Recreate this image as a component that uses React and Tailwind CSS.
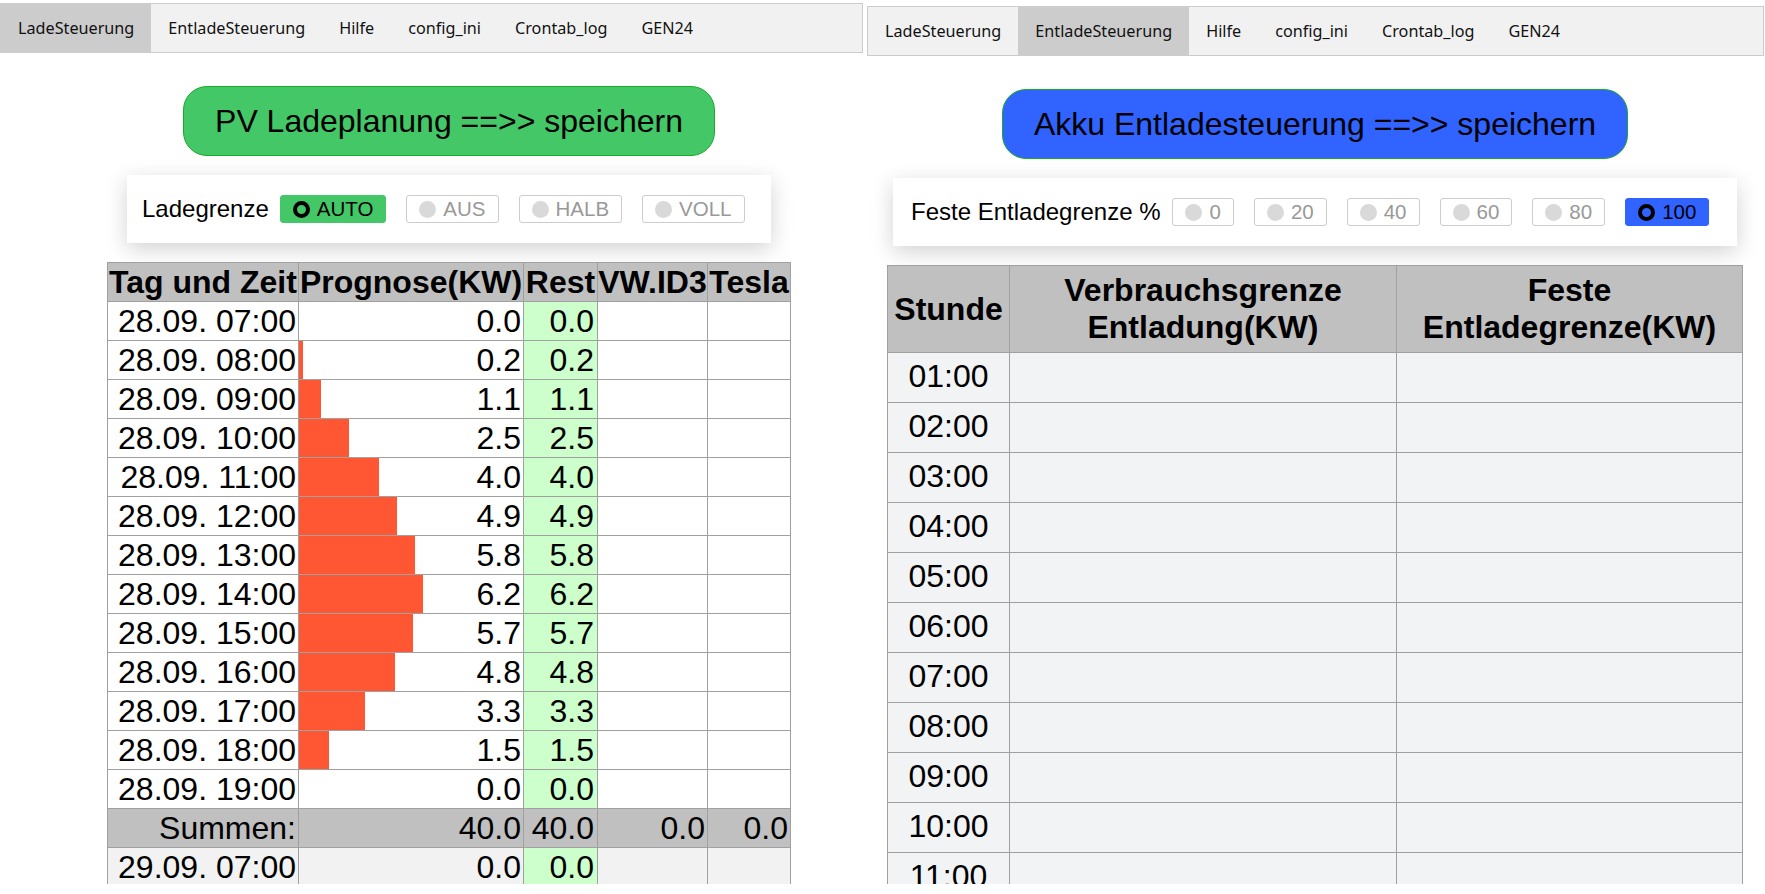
import React from "react";

const tabs = ["LadeSteuerung", "EntladeSteuerung", "Hilfe", "config_ini", "Crontab_log", "GEN24"];

const ladeRows = [
  ["28.09. 07:00", 0.0],
  ["28.09. 08:00", 0.2],
  ["28.09. 09:00", 1.1],
  ["28.09. 10:00", 2.5],
  ["28.09. 11:00", 4.0],
  ["28.09. 12:00", 4.9],
  ["28.09. 13:00", 5.8],
  ["28.09. 14:00", 6.2],
  ["28.09. 15:00", 5.7],
  ["28.09. 16:00", 4.8],
  ["28.09. 17:00", 3.3],
  ["28.09. 18:00", 1.5],
  ["28.09. 19:00", 0.0],
];

const stunden = ["01:00", "02:00", "03:00", "04:00", "05:00", "06:00", "07:00", "08:00", "09:00", "10:00", "11:00", "12:00"];

function TabBar({ active, className }) {
  return (
    <div className={"flex h-[50px] border border-[#ccc] bg-[#f1f1f1] font-['Noto_Sans',sans-serif] text-[16.2px] text-[#111] " + className}>
      {tabs.map((t) => (
        <div
          key={t}
          className={"flex items-center px-[17px] " + (t === active ? "bg-[#ccc]" : "")}
        >
          {t}
        </div>
      ))}
    </div>
  );
}

function Option({ label, checked, color }) {
  if (checked) {
    return (
      <div className={"flex h-[28px] items-center gap-[7px] rounded-[3px] border px-[12px] text-[20.5px] text-black " + color}>
        <span className="h-[17px] w-[17px] rounded-full border-[4px] border-black" />
        {label}
      </div>
    );
  }
  return (
    <div className="flex h-[28px] items-center gap-[7px] rounded-[3px] border border-[#ccc] bg-white px-[12px] text-[20.5px] text-[#999]">
      <span className="h-[17px] w-[17px] rounded-full bg-[#d9d9d9]" />
      {label}
    </div>
  );
}

function LadePane() {
  return (
    <div className="h-[884px] w-[866px] shrink-0 overflow-hidden pt-[3px]">
      <div className="flex w-[898px] flex-col items-center">
        <TabBar active="LadeSteuerung" className="w-[863px] self-start" />

        <button className="mt-[33px] flex h-[70px] w-[532px] items-center justify-center rounded-[24px] border border-[#18ab29] bg-[#44c767] text-[32px] text-black">
          PV Ladeplanung ==&gt;&gt; speichern
        </button>

        <div className="mt-[19px] flex h-[68px] w-[644px] items-center gap-[20px] bg-white pl-[15px] shadow-[0_6px_22px_rgba(0,0,0,0.18)]">
          <span className="-mr-[9px] text-[24px]">Ladegrenze</span>
          <Option label="AUTO" checked color="border-[#44c767] bg-[#44c767]" />
          <Option label="AUS" />
          <Option label="HALB" />
          <Option label="VOLL" />
        </div>

        <table className="mt-[19px] w-[683px] table-fixed border-collapse text-[32px] leading-[36px]">
          <colgroup>
            <col className="w-[191px]" />
            <col className="w-[225px]" />
            <col className="w-[74px]" />
            <col className="w-[110px]" />
            <col className="w-[83px]" />
          </colgroup>
          <thead>
            <tr className="h-[39px] bg-[#c0c0c0]">
              {["Tag und Zeit", "Prognose(KW)", "Rest", "VW.ID3", "Tesla"].map((h) => (
                <th key={h} className="whitespace-nowrap border border-[#a0a0a0] p-0 text-center font-bold">
                  {h}
                </th>
              ))}
            </tr>
          </thead>
          <tbody>
            {ladeRows.map(([zeit, val]) => (
              <tr key={zeit} className="h-[39px] bg-white">
                <td className="border border-[#a0a0a0] p-0 pr-[2px] text-right">{zeit}</td>
                <td className="relative border border-[#a0a0a0] p-0 pr-[2px] text-right">
                  <div className="absolute inset-y-0 left-0 bg-[#ff5733]" style={{ width: val * 20 }} />
                  <span className="relative">{val.toFixed(1)}</span>
                </td>
                <td className="border border-[#a0a0a0] bg-[#ccffcc] p-0 pr-[3px] text-right">{val.toFixed(1)}</td>
                <td className="border border-[#a0a0a0] p-0" />
                <td className="border border-[#a0a0a0] p-0" />
              </tr>
            ))}
            <tr className="h-[39px] bg-[#c0c0c0]">
              <td className="border border-[#a0a0a0] p-0 pr-[2px] text-right">Summen:</td>
              <td className="border border-[#a0a0a0] p-0 pr-[2px] text-right">40.0</td>
              <td className="border border-[#a0a0a0] p-0 pr-[3px] text-right">40.0</td>
              <td className="border border-[#a0a0a0] p-0 pr-[2px] text-right">0.0</td>
              <td className="border border-[#a0a0a0] p-0 pr-[2px] text-right">0.0</td>
            </tr>
            <tr className="h-[39px] bg-[#f2f2f2]">
              <td className="border border-[#a0a0a0] p-0 pr-[2px] text-right">29.09. 07:00</td>
              <td className="border border-[#a0a0a0] p-0 pr-[2px] text-right">0.0</td>
              <td className="border border-[#a0a0a0] bg-[#ccffcc] p-0 pr-[3px] text-right">0.0</td>
              <td className="border border-[#a0a0a0] p-0" />
              <td className="border border-[#a0a0a0] p-0" />
            </tr>
          </tbody>
        </table>
      </div>
    </div>
  );
}

function EntladePane() {
  return (
    <div className="h-[884px] w-[899px] shrink-0 overflow-hidden pt-[6px]">
      <div className="flex w-[898px] flex-col items-center">
        <TabBar active="EntladeSteuerung" className="ml-[1px] w-[897px] self-start" />

        <button className="mt-[33px] flex h-[70px] w-[626px] items-center justify-center rounded-[24px] border border-[#18ab29] bg-[#3063ff] text-[32px] text-black">
          Akku Entladesteuerung ==&gt;&gt; speichern
        </button>

        <div className="mt-[19px] flex h-[68px] w-[844px] items-center gap-[20px] bg-white pl-[18px] shadow-[0_6px_22px_rgba(0,0,0,0.18)]">
          <span className="-mr-[8px] text-[24px]">Feste Entladegrenze %</span>
          <Option label="0" />
          <Option label="20" />
          <Option label="40" />
          <Option label="60" />
          <Option label="80" />
          <Option label="100" checked color="border-[#3063ff] bg-[#3063ff]" />
        </div>

        <table className="mt-[19px] w-[855px] table-fixed border-collapse text-[32px] leading-[37px]">
          <colgroup>
            <col className="w-[122px]" />
            <col className="w-[387px]" />
            <col className="w-[346px]" />
          </colgroup>
          <thead>
            <tr className="h-[87px] bg-[#c0c0c0]">
              <th className="border border-[#a0a0a0] p-0 text-center font-bold">Stunde</th>
              <th className="border border-[#a0a0a0] p-0 text-center font-bold">
                Verbrauchsgrenze
                <br />
                Entladung(KW)
              </th>
              <th className="border border-[#a0a0a0] p-0 text-center font-bold">
                Feste
                <br />
                Entladegrenze(KW)
              </th>
            </tr>
          </thead>
          <tbody>
            {stunden.map((s) => (
              <tr key={s} className="h-[50px] bg-[#f2f3f5]">
                <td className="border border-[#a0a0a0] p-0 pb-[3px] text-center">{s}</td>
                <td className="border border-[#a0a0a0] p-0" />
                <td className="border border-[#a0a0a0] p-0" />
              </tr>
            ))}
          </tbody>
        </table>
      </div>
    </div>
  );
}

export default function App() {
  return (
    <div className="flex h-[894px] w-[1765px] overflow-hidden bg-white font-['Liberation_Sans',Arial,sans-serif] text-black">
      <LadePane />
      <EntladePane />
    </div>
  );
}
